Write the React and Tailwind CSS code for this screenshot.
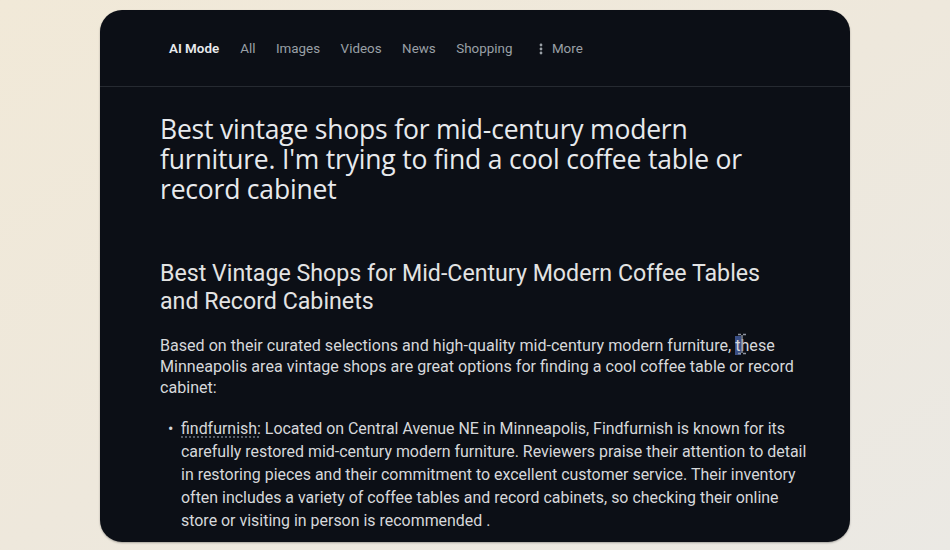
import React from 'react';

const tabs = ['All', 'Images', 'Videos', 'News', 'Shopping'];

const App = () => {
  return (
    <div className="w-[950px] h-[550px] overflow-hidden bg-gradient-to-br from-[#f1e9d8] via-[#eee8dc] to-[#ebe9e4] pt-[10px] flex justify-center font-['Roboto',sans-serif]">
      <div className="w-[750px] h-[532px] bg-[#0c0f16] rounded-[22px] overflow-hidden shadow-[0_1px_2px_rgba(0,0,0,0.3)]">
        {/* Tabs */}
        <div className="h-[77px] border-b border-[#262a31] flex items-center pl-[69px] pt-[3px] text-[13.4px] text-[#9aa0a6]">
          <span className="text-[#e8eaed] font-semibold mr-[21px]">AI Mode</span>
          {tabs.map((t) => (
            <span key={t} className="mr-[20.5px]">{t}</span>
          ))}
          <span className="flex items-center ml-[6px]">
            <svg width="4" height="12" viewBox="0 0 4 12" className="mr-[9px]">
              <circle cx="2" cy="2" r="1.4" fill="#9aa0a6" />
              <circle cx="2" cy="6" r="1.4" fill="#9aa0a6" />
              <circle cx="2" cy="10" r="1.4" fill="#9aa0a6" />
            </svg>
            More
          </span>
        </div>

        {/* Answer */}
        <div className="pl-[60px] pr-[40px] pt-[27px] text-[#e8eaed]">
          <h1 className="w-[610px] text-[26.5px] leading-[30px] font-normal font-['Open_Sans',sans-serif] tracking-[-0.2px]">
            Best vintage shops for mid-century modern furniture. I'm trying to find a cool coffee table or record cabinet
          </h1>

          <h2 className="mt-[55px] w-[640px] text-[23.2px] leading-[28px] font-normal text-[#e3e3e3]">
            Best Vintage Shops for Mid-Century Modern Coffee Tables and Record Cabinets
          </h2>

          <p className="mt-[20px] w-[640px] text-[16.1px] leading-[21px] text-[#d6d8db]">
            Based on their curated selections and high-quality mid-century modern furniture,{' '}
            <span className="relative">
              <span className="bg-[#3a4f86]">t</span>hese
              <svg
                width="10"
                height="22"
                viewBox="0 0 10 22"
                className="absolute left-[2px] top-[-3px]"
              >
                <path
                  d="M1 1.5h3M6 1.5h3M5 2v18M1 20.5h3M6 20.5h3"
                  stroke="#8d93a0"
                  strokeWidth="1.4"
                  fill="none"
                />
              </svg>
            </span>{' '}
            Minneapolis area vintage shops are great options for finding a cool coffee table or record cabinet:
          </p>

          <ul className="mt-[19px] w-[650px] text-[15.95px] leading-[23px] text-[#d6d8db]">
            <li className="flex">
              <span className="w-[21px] pl-[8px] shrink-0">•</span>
              <span>
                <span className="underline decoration-dotted decoration-[#6b7280] underline-offset-[3px]">
                  findfurnish:
                </span>{' '}
                Located on Central Avenue NE in Minneapolis, Findfurnish is known for its carefully restored
                mid-century modern furniture. Reviewers praise their attention to detail in restoring pieces and
                their commitment to excellent customer service. Their inventory often includes a variety of coffee
                tables and record cabinets, so checking their online store or visiting in person is recommended .
              </span>
            </li>
          </ul>
        </div>
      </div>
    </div>
  );
};

export default App;
